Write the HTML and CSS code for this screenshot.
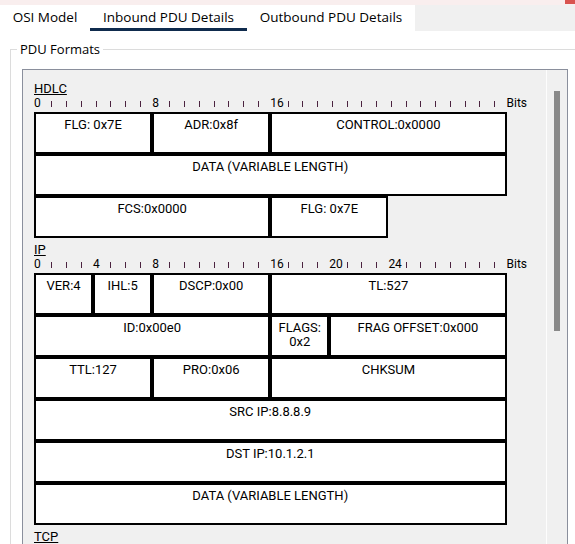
FILE: index.html
```html
<!DOCTYPE html>
<html>
<head>
<meta charset="utf-8">
<link rel="stylesheet" href="styles.css">
</head>
<body>
<div class="topstrip"><div class="close"></div></div>
<div class="tabs">
  <div class="tab osi">OSI Model</div>
  <div class="tab inb active">Inbound PDU Details</div>
  <div class="tab outb">Outbound PDU Details</div>
</div>
<fieldset class="group">
  <legend>PDU Formats</legend>
  <div class="panel">
    <div class="content">
      <section class="proto">
        <div class="pname">HDLC</div>
        <div class="ruler">
          <span class="n">0</span><span class="t"></span><span class="t"></span><span class="t"></span><span class="t"></span><span class="t"></span><span class="t"></span><span class="t"></span>
          <span class="n">8</span><span class="t"></span><span class="t"></span><span class="t"></span><span class="t"></span><span class="t"></span><span class="t"></span><span class="t"></span>
          <span class="n">16</span><span class="t"></span><span class="t"></span><span class="t"></span><span class="t"></span><span class="t"></span><span class="t"></span><span class="t"></span>
          <span class="t"></span><span class="t"></span><span class="t"></span><span class="t"></span><span class="t"></span><span class="t"></span><span class="t"></span><span class="t"></span>
          <span class="bits">Bits</span>
        </div>
        <div class="fields">
          <div class="f c8">FLG: 0x7E</div>
          <div class="f c8">ADR:0x8f</div>
          <div class="f c16">CONTROL:0x0000</div>
          <div class="f c32">DATA (VARIABLE LENGTH)</div>
          <div class="f c16">FCS:0x0000</div>
          <div class="f c8">FLG: 0x7E</div>
        </div>
      </section>
      <section class="proto">
        <div class="pname">IP</div>
        <div class="ruler">
          <span class="n">0</span><span class="t"></span><span class="t"></span><span class="t"></span>
          <span class="n">4</span><span class="t"></span><span class="t"></span><span class="t"></span>
          <span class="n">8</span><span class="t"></span><span class="t"></span><span class="t"></span><span class="t"></span><span class="t"></span><span class="t"></span><span class="t"></span>
          <span class="n">16</span><span class="t"></span><span class="t"></span><span class="t"></span>
          <span class="n">20</span><span class="t"></span><span class="t"></span><span class="t"></span>
          <span class="n">24</span><span class="t"></span><span class="t"></span><span class="t"></span><span class="t"></span><span class="t"></span><span class="t"></span><span class="t"></span>
          <span class="bits">Bits</span>
        </div>
        <div class="fields">
          <div class="f c4">VER:4</div>
          <div class="f c4">IHL:5</div>
          <div class="f c8">DSCP:0x00</div>
          <div class="f c16">TL:527</div>
          <div class="f c16">ID:0x00e0</div>
          <div class="f c4">FLAGS:<br>0x2</div>
          <div class="f c12">FRAG OFFSET:0x000</div>
          <div class="f c8">TTL:127</div>
          <div class="f c8">PRO:0x06</div>
          <div class="f c16">CHKSUM</div>
          <div class="f c32">SRC IP:8.8.8.9</div>
          <div class="f c32">DST IP:10.1.2.1</div>
          <div class="f c32">DATA (VARIABLE LENGTH)</div>
        </div>
      </section>
      <section class="proto">
        <div class="pname">TCP</div>
      </section>
    </div>
    <div class="vscroll"><div class="thumb"></div></div>
  </div>
</fieldset>
</body>
</html>
```

FILE: styles.css
```css
html, body {
  margin: 0;
  padding: 0;
  height: 544px;
  overflow: hidden;
  background: #fff;
}
body {
  font-family: "Open Sans", "Noto Sans", sans-serif;
  color: #000;
}
.topstrip {
  height: 5px;
  background: #f9eeee;
  display: flex;
  justify-content: flex-end;
}
.topstrip .close {
  width: 10px;
  height: 4px;
  background: #d9534f;
}
.tabs {
  display: flex;
  height: 26px;
  background: #f0f0f0;
}
.tab {
  background: #fff;
  font-size: 13.5px;
  line-height: 21px;
  padding-top: 2px;
  border-bottom: 3px solid transparent;
  text-align: center;
  white-space: nowrap;
  color: #000;
}
.tab.osi { width: 90px; }
.tab.inb { width: 157px; }
.tab.outb { width: 168px; }
.tab.active { border-bottom-color: #0f2b4d; }

fieldset.group {
  margin: 9px -20px 0 10px;
  padding: 11px 0 0 11px;
  border: 1px solid #dcdcdc;
  border-bottom: none;
  min-width: 0;
}
fieldset.group legend {
  font-size: 13px;
  line-height: 18px;
  padding: 0 3px;
  margin-left: -5px;
  color: #000;
}
.panel {
  width: 546px;
  height: 520px;
  box-sizing: border-box;
  border: 1px solid #8a8f9c;
  background: #f0f0f0;
  display: flex;
}
.content {
  flex: 1;
  padding: 11px 0 0 11px;
  font-family: Roboto, "Liberation Sans", sans-serif;
  color: #000;
}
.vscroll {
  width: 20px;
  border-left: 1px solid #fdfdfd;
}
.thumb {
  margin: 21px 0 0 7px;
  width: 6px;
  height: 240px;
  background: #898989;
}
.proto {
  margin-bottom: 4px;
}
.pname {
  font-size: 13px;
  line-height: 15px;
  height: 15px;
  text-decoration: underline;
}
.ruler {
  display: grid;
  grid-template-columns: repeat(32, 14.78px) auto;
  height: 16px;
  align-items: start;
}
.n, .bits {
  font-size: 12px;
  line-height: 14px;
  white-space: nowrap;
}
.t {
  width: 1px;
  height: 6px;
  margin: 5px 0 0 2.5px;
  background: #4b2340;
}
.fields {
  display: grid;
  grid-template-columns: repeat(32, 14.78px);
  grid-auto-rows: 42px;
}
.f {
  box-sizing: border-box;
  border: 2px solid #000;
  background: #fff;
  text-align: center;
  font-size: 13px;
  line-height: 14px;
  padding-top: 4px;
  overflow: hidden;
  white-space: nowrap;
}
.c4 { grid-column: span 4; }
.c8 { grid-column: span 8; }
.c12 { grid-column: span 12; }
.c16 { grid-column: span 16; }
.c32 { grid-column: span 32; }
```
